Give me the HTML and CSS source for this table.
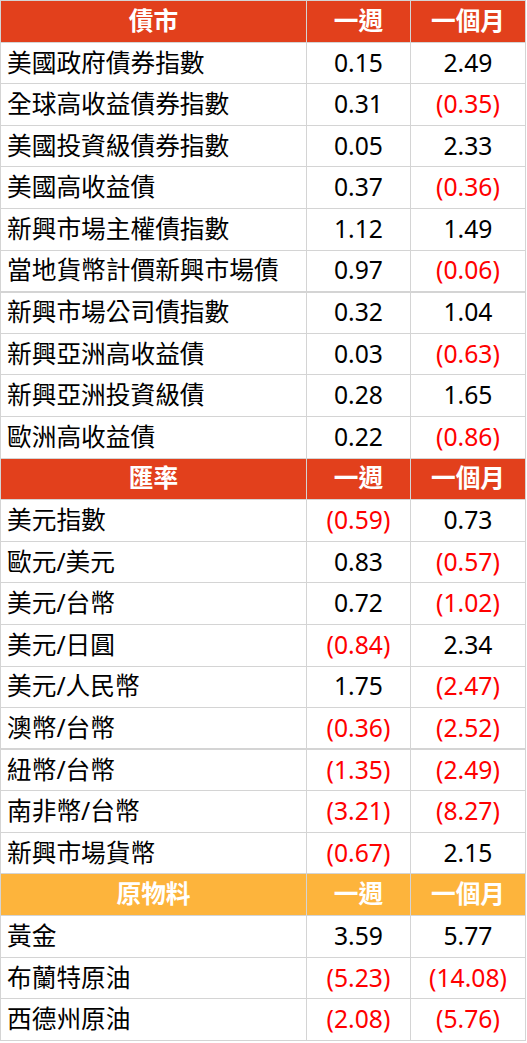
FILE: index.html
```html
<!DOCTYPE html>
<html lang="zh-Hant">
<head>
<meta charset="utf-8">
<title>市場表現</title>
<link rel="stylesheet" href="styles.css">
</head>
<body>
<table class="perf">
  <colgroup>
    <col class="c-name"><col class="c-week"><col class="c-month">
  </colgroup>
  <tbody>
    <tr class="head head-red"><th>債市</th><th>一週</th><th>一個月</th></tr>
    <tr><td>美國政府債券指數</td><td>0.15</td><td>2.49</td></tr>
    <tr><td>全球高收益債券指數</td><td>0.31</td><td class="neg">(0.35)</td></tr>
    <tr><td>美國投資級債券指數</td><td>0.05</td><td>2.33</td></tr>
    <tr><td>美國高收益債</td><td>0.37</td><td class="neg">(0.36)</td></tr>
    <tr><td>新興市場主權債指數</td><td>1.12</td><td>1.49</td></tr>
    <tr class="thick"><td>當地貨幣計價新興市場債</td><td>0.97</td><td class="neg">(0.06)</td></tr>
    <tr><td>新興市場公司債指數</td><td>0.32</td><td>1.04</td></tr>
    <tr><td>新興亞洲高收益債</td><td>0.03</td><td class="neg">(0.63)</td></tr>
    <tr><td>新興亞洲投資級債</td><td>0.28</td><td>1.65</td></tr>
    <tr><td>歐洲高收益債</td><td>0.22</td><td class="neg">(0.86)</td></tr>
    <tr class="head head-red"><th>匯率</th><th>一週</th><th>一個月</th></tr>
    <tr><td>美元指數</td><td class="neg">(0.59)</td><td>0.73</td></tr>
    <tr><td>歐元/美元</td><td>0.83</td><td class="neg">(0.57)</td></tr>
    <tr><td>美元/台幣</td><td>0.72</td><td class="neg">(1.02)</td></tr>
    <tr><td>美元/日圓</td><td class="neg">(0.84)</td><td>2.34</td></tr>
    <tr><td>美元/人民幣</td><td>1.75</td><td class="neg">(2.47)</td></tr>
    <tr class="thick"><td>澳幣/台幣</td><td class="neg">(0.36)</td><td class="neg">(2.52)</td></tr>
    <tr><td>紐幣/台幣</td><td class="neg">(1.35)</td><td class="neg">(2.49)</td></tr>
    <tr><td>南非幣/台幣</td><td class="neg">(3.21)</td><td class="neg">(8.27)</td></tr>
    <tr><td>新興市場貨幣</td><td class="neg">(0.67)</td><td>2.15</td></tr>
    <tr class="head head-amber"><th>原物料</th><th>一週</th><th>一個月</th></tr>
    <tr><td>黃金</td><td>3.59</td><td>5.77</td></tr>
    <tr><td>布蘭特原油</td><td class="neg">(5.23)</td><td class="neg">(14.08)</td></tr>
    <tr><td>西德州原油</td><td class="neg">(2.08)</td><td class="neg">(5.76)</td></tr>
  </tbody>
</table>
</body>
</html>
```

FILE: styles.css
```css
html, body {
  margin: 0;
  padding: 0;
  background: #ffffff;
}

.perf {
  border-collapse: collapse;
  table-layout: fixed;
  width: 525px;
  font-family: "Noto Sans", "Noto Sans CJK TC", sans-serif;
  font-size: 24.7px;
  color: #000000;
}

.c-name { width: 306px; }
.c-week { width: 104px; }
.c-month { width: 115px; }

.perf tr {
  height: 41.6px;
}

.perf td,
.perf th {
  border: 1px solid #d4d4d4;
  padding: 0;
  text-align: center;
  vertical-align: middle;
  line-height: 1;
  white-space: nowrap;
}

.perf td:first-child {
  text-align: left;
  padding-left: 6px;
}

.perf th {
  color: #ffffff;
  font-weight: 700;
}

.head-red th { background: #e2401c; }
.head-amber th { background: #fdb43c; }

.perf tr.thick td {
  border-bottom: 2px solid #d4d4d4;
}

.neg { color: #ff0000; }
```
